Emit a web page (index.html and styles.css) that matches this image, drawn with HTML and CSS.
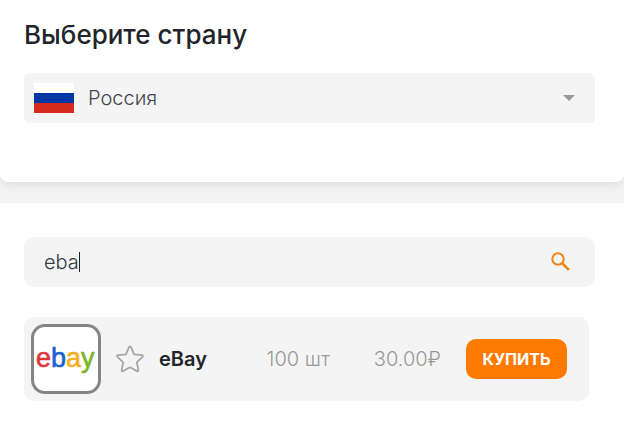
FILE: index.html
```html
<!DOCTYPE html>
<html lang="ru">
<head>
<meta charset="utf-8">
<meta name="viewport" content="width=device-width, initial-scale=1">
<title>Выберите страну</title>
<link rel="stylesheet" href="styles.css">
</head>
<body>
<section class="country">
  <h1 class="title"><label for="country">Выберите страну</label></h1>
  <div class="field field-select">
    <svg class="flag" viewBox="0 0 40 30" aria-hidden="true">
      <rect width="40" height="10" fill="#fff"/>
      <rect y="10" width="40" height="10" fill="#0037a6"/>
      <rect y="20" width="40" height="10" fill="#d52b1e"/>
    </svg>
    <select class="select" id="country">
      <option>Россия</option>
    </select>
    <svg class="arrow" viewBox="0 0 12 6" aria-hidden="true"><path d="M0 0h12L6 6z" fill="#999"/></svg>
  </div>
</section>
<main class="services">
  <form class="field field-search">
    <label class="query">
      <input class="input" type="text" value="eba" aria-label="Поиск сервиса">
      <span class="caret"></span>
    </label>
    <button class="search" type="submit" aria-label="Найти">
      <svg class="search-icon" viewBox="0 0 20 20" fill="none" stroke="#f08418" aria-hidden="true">
        <circle cx="7" cy="7" r="5.7" stroke-width="2"/>
        <path d="M11.5 11.5l6.3 6.3" stroke-width="2.6"/>
      </svg>
    </button>
  </form>
  <article class="service">
    <svg class="logo" viewBox="0 0 64 64" role="img" aria-label="eBay">
      <text class="logo-text" x="2" y="40"><tspan class="logo-red">e</tspan><tspan class="logo-blue">b</tspan><tspan class="logo-yellow">a</tspan><tspan class="logo-green">y</tspan></text>
    </svg>
    <button class="star" type="button" aria-label="В избранное">
      <svg class="star-icon" viewBox="0 0 28 28" aria-hidden="true">
        <path d="M13 2.2q1-1.6 2 0l3.1 7.2 7.9.8q1.5.2.5 1.6l-5.7 5.5 1.6 7.8q.2 1.6-1.3 1L14 22.3l-7.1 3.8q-1.5.6-1.3-1l1.6-7.8-5.7-5.5q-1-1.4.5-1.6l7.9-.8z" fill="none" stroke="#a6a6a6" stroke-width="1.8" stroke-linejoin="round"/>
      </svg>
    </button>
    <h2 class="name">eBay</h2>
    <span class="count">100 шт</span>
    <span class="price">30.00₽</span>
    <button class="buy" type="button">КУПИТЬ</button>
  </article>
</main>
</body>
</html>
```
FILE: styles.css
```css
* {
  box-sizing: border-box;
}

body {
  margin: 0;
  background: #f3f3f3;
  color: #212529;
  font-family: Inter, "Noto Sans", sans-serif;
  font-size: 20px;
  line-height: 24px;
}

button,
input,
select {
  margin: 0;
  padding: 0;
  border: 0;
  background: none;
  color: inherit;
  font: inherit;
  outline: none;
}

.country {
  padding: 19px 29px 59px 24px;
  border-radius: 0 0 8px 8px;
  background: #fff;
  box-shadow: 0 2px 8px rgba(0, 0, 0, 0.1);
}

.title {
  margin: 0 0 22px;
  font-size: 26px;
  font-weight: 500;
  line-height: 32px;
}

.field {
  display: flex;
  align-items: center;
  height: 50px;
  background: #f4f4f4;
}

.field-select {
  gap: 14px;
  padding: 0 20px 0 10px;
  border-radius: 6px;
}

.flag {
  width: 40px;
  height: 30px;
}

.select {
  flex: 1;
  appearance: none;
  color: #45454f;
  font-weight: 300;
}

.arrow {
  width: 12px;
  height: 6px;
}

.services {
  margin-top: 21px;
  padding: 34px 29px 25px 24px;
  background: #fff;
}

.field-search {
  padding: 0 24px 0 20px;
  border-radius: 10px;
}

.query {
  display: flex;
  flex: 1;
  align-items: center;
}

.input {
  field-sizing: content;
  color: #333a42;
  font-weight: 300;
}

.caret {
  width: 1px;
  height: 20px;
  background: #222;
}

.search {
  display: flex;
}

.search-icon {
  width: 20px;
  height: 20px;
}

.service {
  display: flex;
  align-items: center;
  height: 84px;
  margin: 30px 6px 0 0;
  padding: 0 22px 0 7px;
  border-radius: 10px;
  background: #f4f4f4;
}

.logo {
  flex: none;
  width: 70px;
  height: 70px;
  border: 3px solid #858585;
  border-radius: 14px;
  background: #fff;
}

.logo-text {
  font-family: "Liberation Sans", sans-serif;
  font-size: 27px;
  stroke-width: 0.6px;
}

.logo-red {
  fill: #e0343c;
  stroke: #e0343c;
}

.logo-blue {
  fill: #1c5fd0;
  stroke: #1c5fd0;
}

.logo-yellow {
  fill: #f5af1e;
  stroke: #f5af1e;
}

.logo-green {
  fill: #7db526;
  stroke: #7db526;
}

.star {
  display: flex;
  margin: 0 15px;
}

.star-icon {
  width: 28px;
  height: 28px;
}

.name {
  flex: 1;
  margin: 0;
  font-size: 20px;
  font-weight: 600;
}

.count,
.price {
  color: #999;
  font-weight: 300;
}

.count {
  margin-right: 44px;
}

.price {
  margin-right: 25px;
}

.buy {
  width: 101px;
  height: 40px;
  border-radius: 10px;
  background: #ff7a00;
  color: #fff;
  font-size: 16px;
  font-weight: 700;
}
```
